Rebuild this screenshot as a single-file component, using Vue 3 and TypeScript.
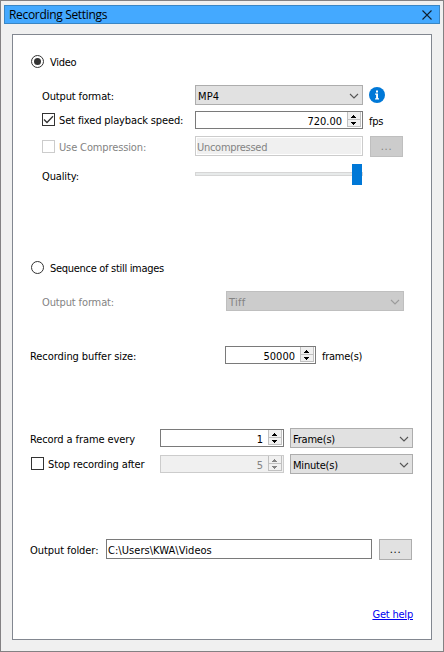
<script setup lang="ts">
import { h, ref, type FunctionalComponent } from 'vue'

const mode = ref<'video' | 'stills'>('video')
const fixedSpeed = ref(true)
const stopAfter = ref(false)

const Chevron: FunctionalComponent = () =>
  h('svg', { class: 'chevron', width: 10, height: 6, viewBox: '0 0 10 6' }, [
    h('path', { d: 'M1 1L5 5L9 1', fill: 'none', stroke: 'currentColor', 'stroke-width': 1.1 }),
  ])

const Stepper: FunctionalComponent = () =>
  h('svg', { class: 'stepper', width: 14, height: 15, viewBox: '0 0 14 15', 'shape-rendering': 'crispEdges' }, [
    h('path', { d: 'M0 0H14V15H0z', fill: '#f0f0f0' }),
    h('path', { d: 'M.5 0V14.5H13.5V0M0 7.5H14', fill: 'none', stroke: '#c0c0c0' }),
    h('path', { d: 'M6 3h1v1h1v1h1v1H4V5h1V4h1zM4 10h5v1H8v1H7v1H6v-1H5v-1H4z', fill: 'currentColor' }),
  ])
</script>

<template>
  <main class="window">
    <header class="titlebar">
      <span class="title">Recording Settings</span>
      <svg class="close" width="10" height="10" viewBox="0 0 10 10"><path d="M.5 .5L9.5 9.5M9.5 .5L.5 9.5" fill="none" stroke="#10202e" stroke-width="1.1" /></svg>
    </header>

    <section class="panel">
      <div class="row video" @click="mode = 'video'">
        <i class="radio" :class="{ on: mode === 'video' }"></i><span class="caption">Video</span>
      </div>
      <div class="row video-format">
        <span class="label">Output format:</span>
        <div class="combo"><span>MP4</span><Chevron /></div>
        <svg class="info" width="16" height="16" viewBox="0 0 16 16">
          <circle cx="8" cy="8" r="8" fill="#0078d7" />
          <path d="M7 3.6h2v2H7zM6.1 6.6H9v4.7h1v1.2H6.1v-1.2h1V7.8h-1z" fill="#fff" />
        </svg>
      </div>
      <div class="row speed">
        <div class="label check" @click="fixedSpeed = !fixedSpeed">
          <i class="box"><svg v-if="fixedSpeed" width="11" height="11" viewBox="0 0 11 11"><path d="M1 5.5L4 8.5L10 2.3" fill="none" stroke="#333" stroke-width="1.3" /></svg></i>
          <span>Set fixed playback speed:</span>
        </div>
        <div class="spin"><span>720.00</span><Stepper /></div>
        <span class="unit">fps</span>
      </div>
      <div class="row compression">
        <div class="label check disabled"><i class="box"></i><span>Use Compression:</span></div>
        <div class="field disabled">Uncompressed</div>
        <button class="browse" disabled>...</button>
      </div>
      <div class="row quality">
        <span class="label">Quality:</span>
        <div class="slider"><div class="track"></div><div class="thumb"></div></div>
      </div>

      <div class="row stills" @click="mode = 'stills'">
        <i class="radio" :class="{ on: mode === 'stills' }"></i><span class="caption">Sequence of still images</span>
      </div>
      <div class="row stills-format">
        <span class="label disabled">Output format:</span>
        <div class="combo disabled"><span>Tiff</span><Chevron /></div>
      </div>

      <div class="row buffer">
        <span class="label">Recording buffer size:</span>
        <div class="spin"><span>50000</span><Stepper /></div>
        <span class="unit">frame(s)</span>
      </div>

      <div class="row interval">
        <span class="label">Record a frame every</span>
        <div class="spin"><span>1</span><Stepper /></div>
        <div class="combo"><span>Frame(s)</span><Chevron /></div>
      </div>
      <div class="row stop">
        <div class="label check" @click="stopAfter = !stopAfter"><i class="box"></i><span>Stop recording after</span></div>
        <div class="spin disabled"><span>5</span><Stepper /></div>
        <div class="combo"><span>Minute(s)</span><Chevron /></div>
      </div>

      <div class="row folder">
        <span class="label">Output folder:</span>
        <div class="field">C:\Users\KWA\Videos</div>
        <button class="browse">...</button>
      </div>
      <div class="row help"><a href="#">Get help</a></div>
    </section>
  </main>
</template>

<style>
body { background: #f0f0f0; }
</style>

<style scoped>
* { box-sizing: border-box; }
.window {
  width: 444px; height: 652px; padding: 4px 3px 0;
  border: 1px solid #838183; background: #f0f0f0; color: #000;
  font: 11px/14px "DejaVu Sans Condensed", "DejaVu Sans", sans-serif;
  white-space: nowrap; letter-spacing: -0.13px;
}
.titlebar {
  display: flex; align-items: center; justify-content: space-between;
  height: 19px; padding: 0 7px 0 4px; border: 1px solid #3a86c4; background: #44a9ff;
}
.title { font: 12px/16px "Open Sans", sans-serif; letter-spacing: -0.32px; }
.close { display: block; }
.panel {
  width: 420px; height: 606px; margin: 10px 0 0 8px; padding: 20px 0 0 17px;
  border: 1px solid #828790; background: #fff;
}
.row { display: flex; align-items: center; }
.row span { padding-top: 4px; }
.row .caption, .row .check span, .folder .label { padding-top: 2px; }
.video { height: 13px; }
.video-format { height: 20px; margin-top: 17px; }
.speed { height: 18px; margin-top: 6px; }
.compression { height: 21px; margin-top: 7px; }
.quality { height: 21px; margin-top: 7px; }
.stills { height: 13px; margin-top: 76px; }
.stills-format { height: 20px; margin-top: 17px; }
.buffer { height: 18px; margin-top: 35px; }
.interval { height: 20px; margin-top: 64px; }
.stop { height: 20px; margin-top: 6px; }
.folder { height: 21px; margin-top: 65px; }
.help { height: 14px; margin-top: 48px; width: 383px; justify-content: flex-end; letter-spacing: -0.2px; }

.label { flex: none; width: 165px; padding-left: 12px; }
.caption { margin-left: 6px; letter-spacing: -0.3px; }
.stills-format .label { width: 196px; }
.buffer .label { width: 195px; padding-left: 0; letter-spacing: -0.07px; }
.interval .label { width: 130px; padding-left: 0; letter-spacing: -0.1px; }
.stop .label { width: 130px; padding-left: 1px; }
.folder .label { width: 76px; padding-left: 0; letter-spacing: -0.07px; }
.label.disabled { color: #838383; }

.radio {
  display: grid; place-items: center; width: 13px; height: 13px; margin-left: 1px;
  border: 1px solid #333; border-radius: 50%; background: #fff;
}
.radio.on::after { content: ""; width: 7px; height: 7px; border-radius: 50%; background: #333; }
.check { display: flex; align-items: center; }
.box { display: block; width: 13px; height: 13px; margin: 0 4px 1px 0; border: 1px solid #333; background: #fff; }
.box svg { display: block; }
.compression .box { margin-bottom: 0; }
.check.disabled { color: #838383; }
.check.disabled .box { border-color: #ccc; }

.combo {
  display: flex; align-items: center; justify-content: space-between;
  width: 168px; height: 20px; padding: 0 3px 0 2px;
  border: 1px solid #adadad; background: #e1e1e1; letter-spacing: -0.2px;
}
.combo .chevron { color: #555; margin-top: 2px; }
.video-format .combo { letter-spacing: 0.15px; }
.combo.disabled { width: 178px; border-color: #bfbfbf; background: #ccc; color: #838383; letter-spacing: 0.3px; }
.combo.disabled .chevron { color: #9b9b9b; }
.interval .combo, .stop .combo { width: 123px; margin-left: 6px; }
.info { margin-left: 6px; }

.spin {
  display: flex; align-items: center; justify-content: flex-end; gap: 5px;
  width: 168px; height: 18px; padding-right: 1px;
  border: 1px solid #7a7a7a; background: #fff;
}
.spin span { letter-spacing: 0; }
.spin .stepper { margin-bottom: 1px; }
.buffer .spin { width: 91px; }
.interval .spin, .stop .spin { width: 124px; }
.spin.disabled { border-color: #ccc; background: #f0f0f0; color: #838383; }
.unit { margin-left: 6px; letter-spacing: -0.25px; }

.field { width: 168px; height: 20px; margin-bottom: 1px; padding: 2px 1px; border: 1px solid #7a7a7a; background: #fff; line-height: 17px; letter-spacing: 0.05px; }
.field.disabled { border-color: #ccc; background: #f0f0f0; color: #838383; box-shadow: inset 0 0 0 1px #fff; letter-spacing: -0.28px; }
.folder .field { width: 266px; }
.browse {
  width: 33px; height: 21px; margin-left: 7px; padding: 1px 0 0; border: 1px solid #adadad;
  background: #e1e1e1; color: #000; font: inherit; letter-spacing: 0.7px;
}
.browse:disabled { border-color: #bfbfbf; background: #ccc; color: #838383; }

.slider { position: relative; width: 168px; height: 21px; padding-top: 8px; }
.track { height: 4px; border: 1px solid #d6d6d6; background: #e7eaea; }
.thumb { position: absolute; top: 0; right: 1px; width: 10px; height: 21px; background: #0078d7; }
a { color: #0000f0; text-decoration: underline; }
</style>
